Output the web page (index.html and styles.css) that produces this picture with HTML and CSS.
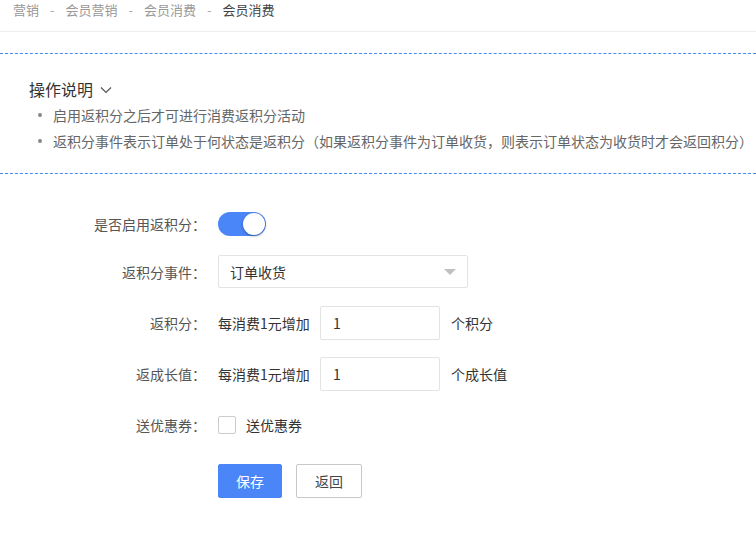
FILE: index.html
```html
<!DOCTYPE html>
<html lang="zh">
<head>
<meta charset="utf-8">
<link rel="stylesheet" href="styles.css">
</head>
<body>
<div class="crumbs">
  <span class="crumb">营销</span><span class="sep">-</span><span class="crumb">会员营销</span><span class="sep">-</span><span class="crumb">会员消费</span><span class="sep">-</span><span class="crumb current">会员消费</span>
</div>
<div class="intro">
  <div class="intro-title">操作说明
    <svg class="chev" width="12" height="8" viewBox="0 0 12 8"><path d="M1 1.5 L6 6.5 L11 1.5" fill="none" stroke="#555" stroke-width="1.2"/></svg>
  </div>
  <ul class="notes">
    <li>启用返积分之后才可进行消费返积分活动</li>
    <li>返积分事件表示订单处于何状态是返积分（如果返积分事件为订单收货，则表示订单状态为收货时才会返回积分）</li>
  </ul>
</div>
<div class="form">
  <div class="row row-switch">
    <label class="label">是否启用返积分：</label>
    <div class="switch"><span class="knob"></span></div>
  </div>
  <div class="row row-select">
    <label class="label">返积分事件：</label>
    <div class="select"><span>订单收货</span><span class="caret"></span></div>
  </div>
  <div class="row">
    <label class="label">返积分：</label>
    <span class="pre">每消费1元增加</span>
    <div class="input">1</div>
    <span class="post">个积分</span>
  </div>
  <div class="row">
    <label class="label">返成长值：</label>
    <span class="pre">每消费1元增加</span>
    <div class="input">1</div>
    <span class="post">个成长值</span>
  </div>
  <div class="row row-check">
    <label class="label">送优惠券：</label>
    <span class="checkbox"></span>
    <span class="check-text">送优惠券</span>
  </div>
  <div class="row row-buttons">
    <span class="label"></span>
    <button class="btn btn-primary">保存</button>
    <button class="btn btn-default">返回</button>
  </div>
</div>
</body>
</html>
```
FILE: styles.css
```css
* { box-sizing: border-box; }
html, body { margin: 0; padding: 0; background: #fff; }
body {
  font-family: "Microsoft YaHei", "Noto Sans CJK SC", "Liberation Sans", sans-serif;
  font-size: 14px;
  color: #333;
  width: 756px;
  overflow: hidden;
}
.crumbs {
  height: 32px;
  padding: 0 13px;
  line-height: 20px;
  border-bottom: 1px solid #eee;
  color: #999;
  font-size: 13px;
}
.crumbs .sep { margin: 0 11px; color: #aaa; }
.crumbs .current { color: #444; }
.intro {
  margin-top: 21px;
  border-top: 1px dashed #4a8af4;
  border-bottom: 1px dashed #4a8af4;
  padding: 23px 0 19px;
}
.intro-title {
  font-size: 16px;
  line-height: 24px;
  color: #333;
  padding-left: 29px;
  display: flex;
  align-items: center;
}
.chev { margin-left: 7px; margin-top: 1px; }
.notes {
  list-style: none;
  margin: 1px 0 0;
  padding: 0;
}
.notes li {
  position: relative;
  padding-left: 53px;
  line-height: 26px;
  color: #666;
  white-space: nowrap;
}
.notes li::before {
  content: "";
  position: absolute;
  left: 38px;
  top: 11px;
  width: 4px;
  height: 4px;
  border-radius: 50%;
  background: #888;
}
.form { padding-top: 35px; }
.row {
  display: flex;
  align-items: center;
  height: 33px;
  margin-bottom: 18px;
}
.row-switch { height: 30px; margin-bottom: 16px; }
.row-check { margin-bottom: 23px; }
.label {
  width: 206px;
  text-align: right;
  color: #555;
  margin-right: 12px;
  flex: none;
}
.switch {
  width: 48px;
  height: 24px;
  border-radius: 12px;
  background: #4a86f7;
  position: relative;
}
.knob {
  position: absolute;
  right: 1px;
  top: 1px;
  width: 22px;
  height: 22px;
  border-radius: 50%;
  background: #fff;
  box-shadow: 0 1px 3px rgba(0,0,0,0.35);
}
.select {
  width: 250px;
  height: 33px;
  border: 1px solid #e3e3e3;
  border-radius: 2px;
  display: flex;
  align-items: center;
  justify-content: space-between;
  padding: 0 11px 0 11px;
  color: #333;
}
.caret {
  width: 0; height: 0;
  border-left: 6px solid transparent;
  border-right: 6px solid transparent;
  border-top: 6px solid #c0c0c0;
  margin-top: 1px;
}
.pre { color: #333; width: 102px; flex: none; }
.input {
  width: 120px;
  height: 34px;
  border: 1px solid #e3e3e3;
  border-radius: 2px;
  padding: 0 12px;
  line-height: 32px;
  color: #333;
}
.post { margin-left: 11px; color: #333; }
.checkbox {
  width: 18px;
  height: 18px;
  border: 1px solid #ccc;
  border-radius: 2px;
  margin-right: 10px;
}
.check-text { color: #333; }
.btn {
  font-family: inherit;
  font-size: 14px;
  height: 34px;
  border-radius: 2px;
  padding: 0;
  cursor: pointer;
}
.btn-primary {
  width: 64px;
  background: #4a86f8;
  border: 1px solid #4a86f8;
  color: #fff;
  margin-right: 14px;
}
.btn-default {
  width: 66px;
  background: #fff;
  border: 1px solid #c8c8c8;
  color: #444;
}
```
